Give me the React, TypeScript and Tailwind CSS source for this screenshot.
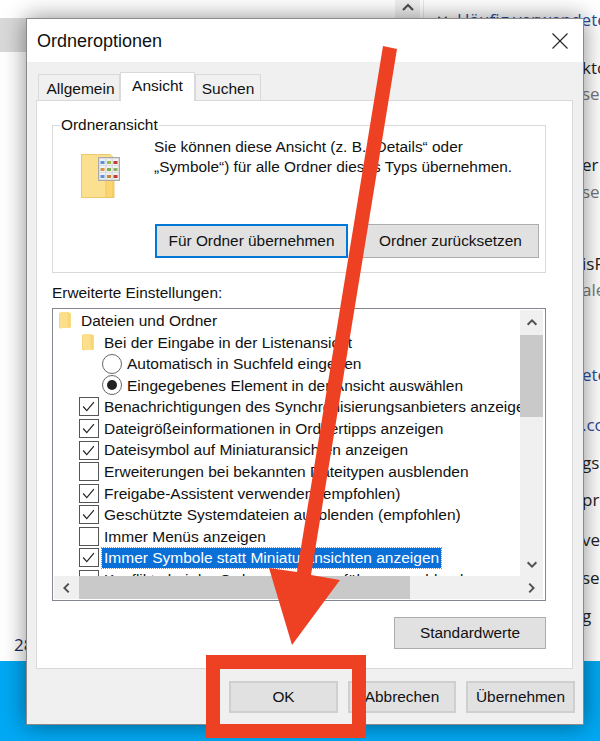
const UI = "font-['Liberation_Sans',Arial,sans-serif]";

function Folder({ className }: { className: string }) {
  return (
    <svg viewBox="0 0 12 16" className={className}>
      <path d="M1 0h8l1.5 1.5V15H3l-2 1z" fill="#fbdf8c" />
      <path d="M8 1h3v13.5H8z" fill="#f9d672" />
      <path d="M0 1h1v14H0z" fill="#f2cf68" />
    </svg>
  );
}

function Check({ on }: { on: boolean }) {
  return (
    <span className="w-[20px] h-[19px] border border-[#555] bg-white flex items-center justify-center shrink-0">
      {on && (
        <svg viewBox="0 0 20 19" className="w-[18px] h-[17px]">
          <path d="M3.5 9.5 L7.5 14 L15.5 4.5" fill="none" stroke="#222" strokeWidth="1.3" />
        </svg>
      )}
    </span>
  );
}

function Radio({ on }: { on: boolean }) {
  return (
    <span className="w-[20px] h-[20px] rounded-full border border-[#666] bg-white flex items-center justify-center shrink-0">
      {on && <span className="w-[10px] h-[10px] rounded-full bg-[#222]" />}
    </span>
  );
}

function Row({ children, pad }: { children: React.ReactNode; pad: string }) {
  return <div className={`h-[21.55px] flex items-center whitespace-nowrap ${pad}`}>{children}</div>;
}

const checks: [boolean, string][] = [
  [true, "Benachrichtigungen des Synchronisierungsanbieters anzeigen"],
  [true, "Dateigrößeinformationen in Ordnertipps anzeigen"],
  [true, "Dateisymbol auf Miniaturansichten anzeigen"],
  [false, "Erweiterungen bei bekannten Dateitypen ausblenden"],
  [true, "Freigabe-Assistent verwenden (empfohlen)"],
  [true, "Geschützte Systemdateien ausblenden (empfohlen)"],
  [false, "Immer Menüs anzeigen"],
];

function Btn({ children, className }: { children: React.ReactNode; className: string }) {
  return (
    <div className={`flex items-center justify-center bg-[#e1e1e1] border border-[#adadad] text-[#111] text-[15.4px] ${className}`}>
      {children}
    </div>
  );
}

function Arrow({ d, className }: { d: string; className: string }) {
  return (
    <svg viewBox="0 0 16 16" className={className}>
      <path d={d} fill="none" stroke="#505050" strokeWidth="2.2" />
    </svg>
  );
}

function BackLine({ children, className }: { children: React.ReactNode; className: string }) {
  return <div className={`absolute left-[582px] text-[17px] leading-5 whitespace-nowrap ${className}`}>{children}</div>;
}

const cells = [
  ["#5b94d6", "#9ab84e", "#c43a30"],
  ["#d8963c", "#7fae4e", "#8fb060"],
  ["#5b94d6", "#c9853a", "#c43a30"],
];

export default function App() {
  return (
    <div className={`relative w-[600px] h-[741px] overflow-hidden flex flex-col ${UI}`}>
      {/* desktop / background window */}
      <div className="h-[661px] bg-white relative font-['Open_Sans',sans-serif]">
        <div className="absolute left-0 top-[18px] w-[26px] h-[34px] bg-[#d9d9d9]" />
        <div className="absolute left-[395px] top-0 w-[25px] h-[18px] bg-[#f0f0f0] flex justify-center">
          <Arrow d="M3 10 L8 5 L13 10" className="w-[16px] h-[16px]" />
        </div>
        <div className="absolute left-[423px] top-0 w-px h-[18px] bg-[#e8e8e8]" />
        <div className="absolute left-[437px] top-[14px]">
          <Arrow d="M2 4 L8 10 L14 4" className="w-[11px] h-[11px]" />
        </div>
        <div className="absolute left-[457px] top-[10px] text-[17px] leading-5 whitespace-nowrap text-[#2b4c9b]">Häufig verwendete</div>
        <div className="absolute left-[14px] top-[635px] text-[17px] leading-5 text-[#1b2a55]">28</div>
        <BackLine className="top-[58px] text-[#222]">kto</BackLine>
        <BackLine className="top-[84px] text-[#777]">ser</BackLine>
        <BackLine className="top-[155px] text-[#222]">er</BackLine>
        <BackLine className="top-[182px] text-[#777]">ser</BackLine>
        <BackLine className="top-[254px] text-[#222]">isP</BackLine>
        <BackLine className="top-[280px] text-[#777]">ale</BackLine>
        <BackLine className="top-[365px] text-[#2b4c9b]">ete</BackLine>
        <BackLine className="top-[415px] text-[#2b4c9b]">.co</BackLine>
        <BackLine className="top-[453px] text-[#222]">gs</BackLine>
        <BackLine className="top-[490px] text-[#222]">pro</BackLine>
        <BackLine className="top-[530px] text-[#222]">ve</BackLine>
        <BackLine className="top-[568px] text-[#222]">sec</BackLine>
        <BackLine className="top-[606px] text-[#222]">g</BackLine>
      </div>
      <div className="flex-1 bg-[#00a8f3]" />

      {/* dialog window */}
      <div className="absolute left-[26px] top-[18px] w-[558px] h-[707px] flex flex-col bg-[#f0f0f0] border border-[#8a8a8a] shadow-[0_0_22px_rgba(0,0,0,0.45)] text-[#111]">
        <div className="h-[43px] bg-white flex items-center justify-between pl-[10px] pr-[15px] shrink-0">
          <span className="text-[18px] pt-[1px]">Ordneroptionen</span>
          <svg viewBox="0 0 16 16" className="w-[16px] h-[16px]">
            <path d="M0.5 0.5 L15.5 15.5 M15.5 0.5 L0.5 15.5" stroke="#222" strokeWidth="1.1" />
          </svg>
        </div>

        <div className="flex-1 flex flex-col pl-[9px] pr-[10px] pt-[10px]">
          <div className="flex h-[28px] pl-[2px] text-[15.5px] relative z-10 items-end">
            <div className="h-[26px] w-[82px] border border-[#d9d9d9] border-b-0 flex items-center justify-center bg-[#f0f0f0] pt-[3px] pl-[3px]">Allgemein</div>
            <div className="h-[29px] w-[75px] border border-[#d9d9d9] border-b-0 flex items-center justify-center bg-white -mb-px pb-[2px]">Ansicht</div>
            <div className="h-[26px] w-[66px] border border-[#d9d9d9] border-b-0 flex items-center justify-center bg-[#f0f0f0] pt-[3px]">Suchen</div>
          </div>

          <div className="h-[569px] bg-white border border-[#d9d9d9] flex flex-col pl-[15px] pr-[26px] pt-[24px] text-[15.4px]">
            {/* group box */}
            <div className="relative h-[148px] border border-[#d9d9d9] flex shrink-0">
              <span className="absolute left-[7px] -top-[10px] bg-white px-px leading-[18px]">Ordneransicht</span>
              <div className="w-[101px] pl-[28px] pt-[28px] shrink-0">
                <svg viewBox="0 0 39 44" className="w-[39px] h-[44px]">
                  <path d="M0.5 0.5H29L33 4V43.5H0.5z" fill="#fbe08f" stroke="#e8c868" />
                  <path d="M25 24h7v19.5h-7z" fill="#f9d672" stroke="#eec558" />
                  <rect x="17.5" y="3.5" width="21" height="23" fill="#dcdcdc" stroke="#aaa" />
                  {cells.map((row, r) =>
                    row.map((fill, c) => (
                      <g key={`${r}${c}`}>
                        <rect x={19 + c * 6.5} y={5 + r * 7} width="5" height="6" fill="#eef2f5" />
                        <rect x={19.5 + c * 6.5} y={7 + r * 7} width="4" height="3" fill={fill} />
                      </g>
                    ))
                  )}
                </svg>
              </div>
              <div className="flex-1 flex flex-col">
                <div className="pt-[11px] leading-[20px] whitespace-nowrap">
                  Sie können diese Ansicht (z. B. „Details“ oder
                  <br />
                  „Symbole“) für alle Ordner dieses Typs übernehmen.
                </div>
                <div className="flex gap-[14px] mt-[47px] pl-[1px]">
                  <Btn className="w-[193px] h-[34px] !border-2 !border-[#0078d7]">Für Ordner übernehmen</Btn>
                  <Btn className="w-[177px] h-[34px]">Ordner zurücksetzen</Btn>
                </div>
              </div>
            </div>

            <div className="mt-[10px] leading-[20px]">Erweiterte Einstellungen:</div>

            {/* tree list */}
            <div className="mt-[5px] w-[494px] h-[293px] border border-[#828790] bg-white p-px flex flex-col shrink-0 overflow-hidden">
              <div className="flex h-[266px] overflow-hidden">
                <div className="flex-1 min-w-0 overflow-hidden text-[15.5px]">
                  <Row pad="pl-[5px] gap-[9px]"><Folder className="w-[13px] h-[17px]" />Dateien und Ordner</Row>
                  <Row pad="pl-[28px] gap-[9px]"><Folder className="w-[13px] h-[17px]" />Bei der Eingabe in der Listenansicht</Row>
                  <Row pad="pl-[48px] gap-[5px]"><Radio on={false} />Automatisch in Suchfeld eingeben</Row>
                  <Row pad="pl-[48px] gap-[5px]"><Radio on />Eingegebenes Element in der Ansicht auswählen</Row>
                  {checks.map(([on, label]) => (
                    <Row key={label} pad="pl-[25px] gap-[5px]"><Check on={on} />{label}</Row>
                  ))}
                  <Row pad="pl-[25px] gap-[3px]">
                    <Check on />
                    <span className="h-[20px] px-[2px] flex items-center bg-[#0a70d8] text-white outline-dotted outline-1 outline-[#d08050]">
                      Immer Symbole statt Miniaturansichten anzeigen
                    </span>
                  </Row>
                  <Row pad="pl-[25px] gap-[5px]"><Check on={false} />Konflikte bei der Ordnerzusammenführung ausblenden</Row>
                </div>
                <div className="w-[23px] bg-[#f0f0f0] flex flex-col shrink-0">
                  <div className="h-[25px] flex items-center justify-center"><Arrow d="M3 10 L8 5 L13 10" className="w-[14px] h-[14px]" /></div>
                  <div className="h-[82px] bg-[#c9c9c9]" />
                  <div className="flex-1" />
                  <div className="h-[25px] flex items-center justify-center"><Arrow d="M3 6 L8 11 L13 6" className="w-[14px] h-[14px]" /></div>
                </div>
                <div className="w-px bg-white shrink-0" />
              </div>
              <div className="h-[23px] flex bg-[#f0f0f0] shrink-0 mr-px">
                <div className="w-[25px] flex items-center justify-center"><Arrow d="M10 3 L5 8 L10 13" className="w-[14px] h-[14px]" /></div>
                <div className="w-[331px] bg-[#c9c9c9]" />
                <div className="flex-1" />
                <div className="w-[25px] flex items-center justify-center"><Arrow d="M6 3 L11 8 L6 13" className="w-[14px] h-[14px]" /></div>
              </div>
            </div>

            <div className="flex justify-end mt-[16px]">
              <Btn className="w-[152px] h-[32px]">Standardwerte</Btn>
            </div>
          </div>

          <div className="flex justify-end gap-[10px] mt-[12px] -mr-[2px]">
            <Btn className="w-[109px] h-[32px] !border-2 !border-[#cfcfcf]">OK</Btn>
            <Btn className="w-[108px] h-[32px] !border-2 !border-[#cfcfcf]">Abbrechen</Btn>
            <Btn className="w-[109px] h-[32px] !border-2 !border-[#cfcfcf]">Übernehmen</Btn>
          </div>
        </div>
      </div>

      {/* red annotation overlay */}
      <svg viewBox="0 0 600 741" className="absolute inset-0 w-[600px] h-[741px] pointer-events-none">
        <path d="M383 46 L397 49 L311 575 L340 580 L292 645 L269 568 L297 572 Z" fill="#ee4123" />
      </svg>
      <div className="absolute left-[206px] top-[655px] w-[160px] h-[83px] border-[14px] border-[#ee4123]" />
    </div>
  );
}
